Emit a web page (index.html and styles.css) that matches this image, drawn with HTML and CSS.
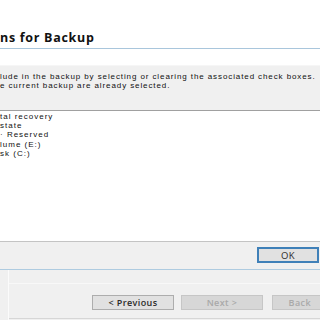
FILE: index.html
```html
<!DOCTYPE html>
<html lang="en">
<head>
  <meta charset="UTF-8" />
  <meta name="viewport" content="width=device-width, initial-scale=1" />
  <title>Select Items for Backup</title>
  <link rel="stylesheet" href="styles.css">
</head>
<body>
  <div class="dialog">
    <div class="header">
      <h1 class="title">ns for Backup</h1>
    </div>

    <div class="desc">
      <p>lude in the backup by selecting or clearing the associated check boxes.</p>
      <p>e current backup are already selected.</p>
    </div>

    <ul class="items">
      <li>tal recovery</li>
      <li>state</li>
      <li>&middot; Reserved</li>
      <li>lume (E:)</li>
      <li>sk (C:)</li>
    </ul>

    <div class="ok-row">
      <button class="btn btn-ok">OK</button>
    </div>

    <div class="footer">
      <div class="rail"></div>
      <div class="pane">
        <div class="nav">
          <button class="btn">&lt; Previous</button>
          <button class="btn" disabled>Next &gt;</button>
          <button class="btn btn-cut" disabled>Back</button>
        </div>
      </div>
    </div>
  </div>
</body>
</html>
```

FILE: styles.css
```css
* { box-sizing: border-box; }
html, body {
  margin: 0;
  padding: 0;
  width: 320px;
  height: 320px;
  overflow: hidden;
  background: #fff;
  font-family: "Open Sans", "Noto Sans", sans-serif;
  color: #1a1a1a;
}
.dialog {
  width: 320px;
  height: 320px;
  display: flex;
  flex-direction: column;
}
.header {
  height: 49px;
  padding-top: 30px;
  border-bottom: 1px solid #a9c6dc;
}
.title {
  margin: 0;
  font-size: 12.5px;
  line-height: 16px;
  font-weight: 700;
  letter-spacing: 0.7px;
  color: #111;
}
.desc {
  margin-top: 16px;
  height: 45px;
  padding-top: 6px;
  background: #f0f0f0;
  border-top: 1px solid #f6f6f6;
}
.desc p,
.items li {
  font-family: "Liberation Sans", Arial, sans-serif;
  white-space: nowrap;
  color: #111;
}
.desc p {
  margin: 0;
  font-size: 8px;
  line-height: 9.2px;
  letter-spacing: 0.9px;
}
.items {
  list-style: none;
  margin: 0;
  padding: 1px 0 0 0;
  height: 132px;
  background: #fff;
  border-top: 1px solid #a0a0a0;
  border-bottom: 1px solid #c4c4c4;
}
.items li {
  font-size: 8px;
  line-height: 9.2px;
  letter-spacing: 1px;
}
.ok-row {
  height: 27px;
  background: #f0f0f0;
  display: flex;
  justify-content: flex-end;
  padding: 5px 1px 0 0;
}
.btn {
  font-family: inherit;
  font-size: 9px;
  font-weight: 600;
  letter-spacing: 0.4px;
  color: #2a2a2a;
  background: #e1e1e1;
  border: 1px solid #adadad;
  padding: 0;
  flex: none;
  width: 82px;
  height: 15px;
  line-height: 13px;
}
.btn[disabled] {
  background: #d7d7d7;
  border-color: #c6c6c6;
  color: #a9a9a9;
}
.btn-cut {
  width: 49px;
  text-align: right;
  padding-right: 10px;
  border-right: none;
}
.btn-ok {
  width: 62px;
  height: 16px;
  border: 2px solid #3f80b8;
  font-weight: 400;
  font-size: 9.5px;
}
.footer {
  flex: 1;
  display: flex;
  background: #f0f0f0;
  border-top: 1px solid #aecbe0;
}
.rail {
  width: 8px;
  flex: none;
}
.pane {
  flex: 1;
  border-left: 1px solid #fbfbfb;
  padding-top: 13px;
  overflow: hidden;
}
.nav {
  height: 36px;
  border-top: 1px solid #f8f8f8;
  border-bottom: 1px solid #d6d6d6;
  display: flex;
  gap: 7px;
  padding: 11px 0 0 83px;
}
.nav .btn + .btn + .btn {
  margin-left: 2px;
}
```
